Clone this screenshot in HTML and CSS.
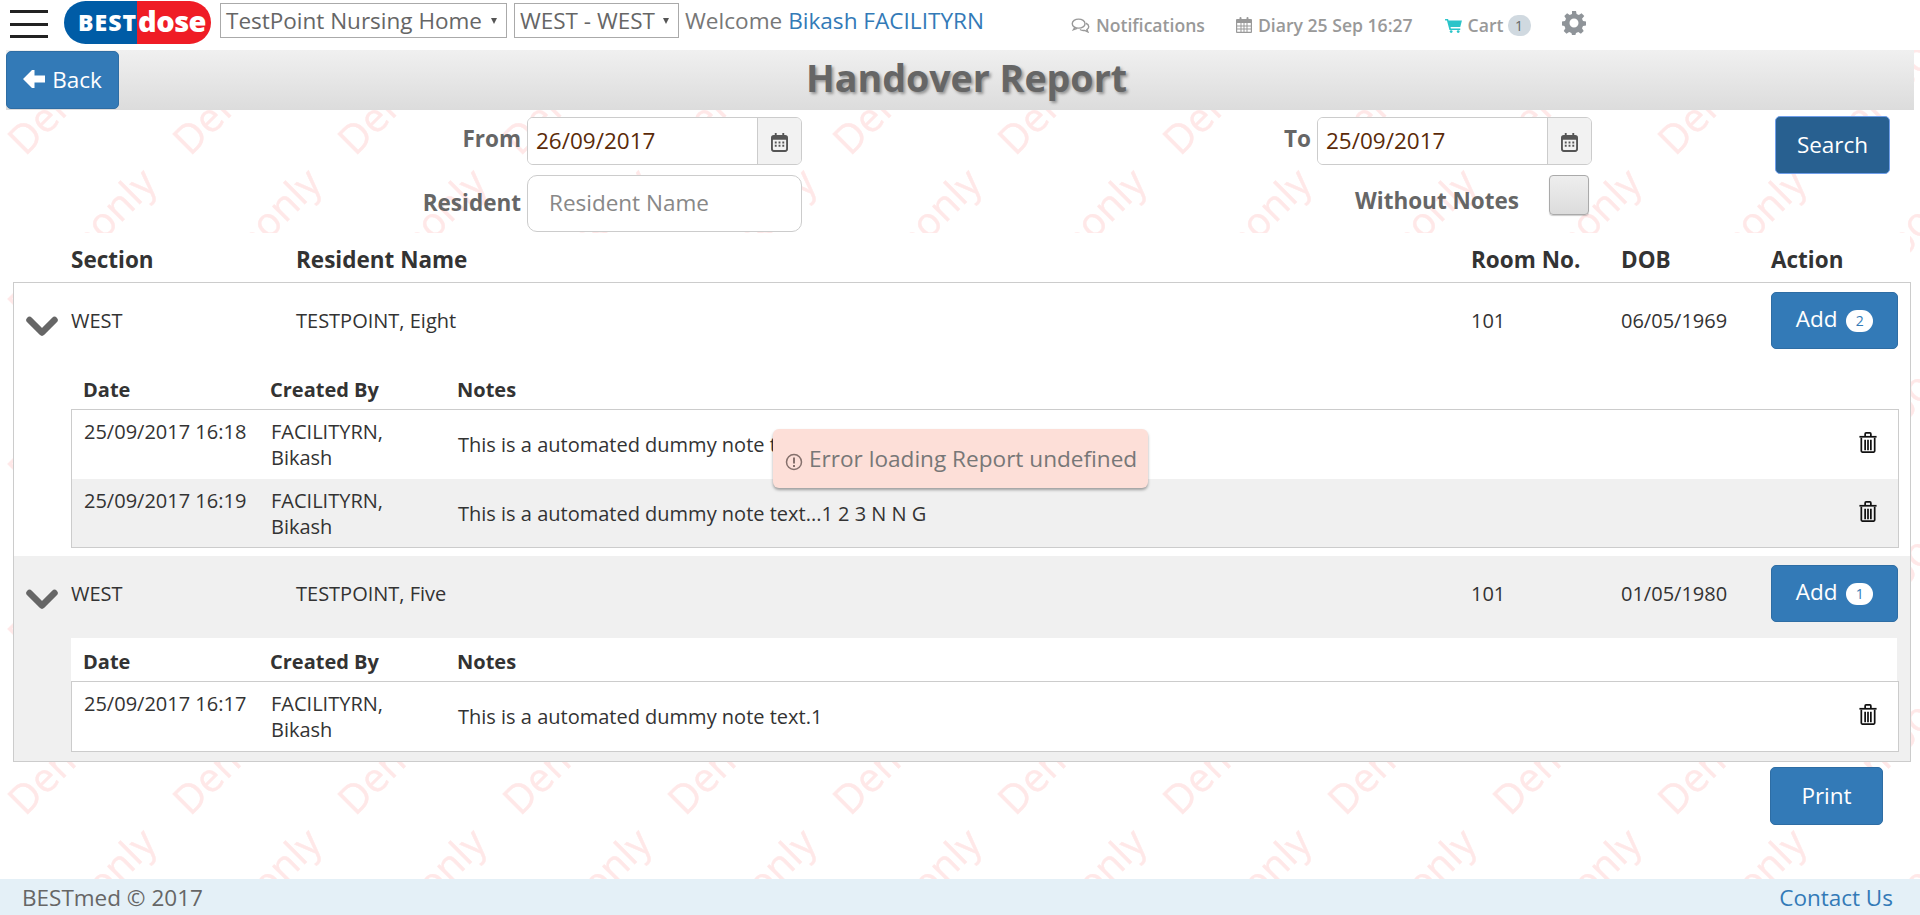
FILE: index.html
```html
<!DOCTYPE html>
<html lang="en">
<head>
<meta charset="utf-8">
<title>Handover Report</title>
<link rel="stylesheet" href="styles.css">
</head>
<body>
<svg class="watermark" aria-hidden="true">
  <defs>
    <pattern id="wm" width="165" height="165" patternUnits="userSpaceOnUse">
      <text class="wm-text" transform="translate(25 157) rotate(-45)">Demo</text>
      <text class="wm-text" transform="translate(103 76) rotate(-45)">only</text>
      <text class="wm-text" transform="translate(-62 76) rotate(-45)">only</text>
    </pattern>
  </defs>
  <rect width="100%" height="100%" fill="url(#wm)"/>
</svg>

<header class="topbar">
  <div class="burger"><span></span><span></span><span></span></div>
  <div class="logo"><span class="logo-best">BEST</span><span class="logo-dose">dose</span></div>
  <div class="select select-home"><span>TestPoint Nursing Home</span><i class="caret"></i></div>
  <div class="select select-west"><span>WEST - WEST</span><i class="caret"></i></div>
  <div class="welcome">Welcome <a class="link">Bikash FACILITYRN</a></div>
  <nav class="topnav">
    <span class="nav-item nav-notes">
      <svg class="ico" viewBox="0 0 20 16" width="19" height="15"><g fill="none" stroke="#999" stroke-width="1.5"><ellipse cx="8" cy="6" rx="6.8" ry="4.8"/><path d="M4 10l-1.5 2.5L6.5 11"/><path d="M15.8 5.6c2 1 3 2.4 3 3.8 0 1.2-.8 2.2-2 3l1 2.4-3.4-1.6c-1.8.3-3.6 0-5-.9"/></g></svg>
      Notifications</span>
    <span class="nav-item nav-diary">
      <svg class="ico" viewBox="0 0 16 18" width="16" height="18"><g fill="#999"><path d="M1 3h14a1 1 0 0 1 1 1v12a1 1 0 0 1-1 1H1a1 1 0 0 1-1-1V4a1 1 0 0 1 1-1zm.2 4v8.8h13.600V7z"/><rect x="3.500" y="1" width="2" height="4" rx="1"/><rect x="10.500" y="1" width="2" height="4" rx="1"/><path d="M4.500 7h1v9h-1zM7.500 7h1v9h-1zM10.500 7h1v9h-1zM1 9.500h14v1H1zM1 12.500h14v1H1z"/></g></svg>
      Diary 25 Sep 16:27</span>
    <span class="nav-item nav-cart">
      <svg class="ico" viewBox="0 0 18 16" width="17" height="15"><path fill="#2bc4c9" d="M0 1h3.200l.5 1.700H18l-1.800 7H5.800l.4 1.500h10v1.600H4.700L2 2.600H0z"/><circle cx="6.500" cy="14.500" r="1.500" fill="#2bc4c9"/><circle cx="14" cy="14.500" r="1.500" fill="#2bc4c9"/></svg>
      Cart <b class="nav-badge">1</b></span>
    <svg class="gear" viewBox="0 0 24 24" width="24" height="24"><path fill="#8f9499" fill-rule="evenodd" d="M10 1h4l.6 3 2.300 1 2.600-1.700 2.800 2.800L20 8.700l1 2.300 3 .6v3.800l-3 .6-1 2.300 1.700 2.600-2.800 2.800-2.600-1.700-2.300 1-.6 2H10l-.6-2-2.300-1-2.600 1.700-2.800-2.800L3.400 18.300l-1-2.300-2.400-.6v-3.800l3-.6 1-2.300-1.700-2.600 2.800-2.800 2.600 1.700 2.300-1zM12 8.500a4.500 4.500 0 1 0 0 9 4.500 4.500 0 0 0 0-9z" transform="translate(0 -1)"/></svg>
  </nav>
</header>

<section class="titlebar">
  <button class="btn btn-back">
    <svg viewBox="0 0 22 18" width="22" height="18"><path fill="#fff" d="M0 9l9-9h2.500v5.500H22v7H11.500V18H9z"/></svg>
    Back</button>
  <h1 class="title">Handover Report</h1>
</section>

<section class="filter">
  <label class="flabel">From</label>
  <div class="datebox"><input class="dateinput" value="26/09/2017"><span class="addon"><svg viewBox="0 0 18 20" width="17" height="19"><path fill="#555" fill-rule="evenodd" d="M3 2h1V0h2v2h6V0h2v2h1a3 3 0 0 1 3 3v12a3 3 0 0 1-3 3H3a3 3 0 0 1-3-3V5a3 3 0 0 1 3-3zm-1 5v10a1 1 0 0 0 1 1h12a1 1 0 0 0 1-1V7zm2 2h2v2H4zm4 0h2v2H8zm4 0h2v2h-2zM4 12.500h2v2H4zm4 0h2v2H8zm4 0h2v2h-2z"/></svg></span></div>
  <label class="flabel">To</label>
  <div class="datebox"><input class="dateinput" value="25/09/2017"><span class="addon"><svg viewBox="0 0 18 20" width="17" height="19"><path fill="#555" fill-rule="evenodd" d="M3 2h1V0h2v2h6V0h2v2h1a3 3 0 0 1 3 3v12a3 3 0 0 1-3 3H3a3 3 0 0 1-3-3V5a3 3 0 0 1 3-3zm-1 5v10a1 1 0 0 0 1 1h12a1 1 0 0 0 1-1V7zm2 2h2v2H4zm4 0h2v2H8zm4 0h2v2h-2zM4 12.500h2v2H4zm4 0h2v2H8zm4 0h2v2h-2z"/></svg></span></div>
  <span></span>
  <button class="btn btn-search">Search</button>
  <label class="flabel flabel-res">Resident</label>
  <input class="resinput" placeholder="Resident Name">
  <div class="notes-filter"><label class="flabel-notes">Without Notes</label><span class="check"></span></div>
</section>

<section class="list">
  <div class="cols head">
    <span></span><span>Section</span><span>Resident Name</span><span>Room No.</span><span>DOB</span><span>Action</span>
  </div>
  <div class="outer">
    <article class="resident">
      <div class="cols main">
        <svg class="chev" viewBox="0 0 32 21" width="32" height="21"><path fill="none" stroke="#666" stroke-width="6.500" stroke-linecap="round" stroke-linejoin="round" d="M3.500 4L16 16.500 28.500 4"/></svg>
        <span>WEST</span><span>TESTPOINT, Eight</span><span>101</span><span>06/05/1969</span>
        <button class="btn btn-add">Add <b class="badge">2</b></button>
      </div>
      <div class="subhead"><span>Date</span><span>Created By</span><span>Notes</span></div>
      <div class="subtable">
        <div class="subrow">
          <span class="cell-top">25/09/2017 16:18</span><span class="cell-top">FACILITYRN,<br>Bikash</span><span class="cell-note">This is a automated dummy note text.1</span>
          <svg class="trash" viewBox="0 0 18 22" width="18" height="21"><g fill="none" stroke="#111" stroke-width="1.800"><path d="M0 5h18"/><path d="M6 5V2a1 1 0 0 1 1-1h4a1 1 0 0 1 1 1v3"/><path d="M2 6v14a1 1 0 0 0 1 1h12a1 1 0 0 0 1-1V6"/><path d="M6 8v11M9 8v11M12 8v11"/></g></svg>
        </div>
        <div class="subrow alt">
          <span class="cell-top">25/09/2017 16:19</span><span class="cell-top">FACILITYRN,<br>Bikash</span><span class="cell-note">This is a automated dummy note text...1 2 3 N N G</span>
          <svg class="trash" viewBox="0 0 18 22" width="18" height="21"><g fill="none" stroke="#111" stroke-width="1.800"><path d="M0 5h18"/><path d="M6 5V2a1 1 0 0 1 1-1h4a1 1 0 0 1 1 1v3"/><path d="M2 6v14a1 1 0 0 0 1 1h12a1 1 0 0 0 1-1V6"/><path d="M6 8v11M9 8v11M12 8v11"/></g></svg>
        </div>
      </div>
    </article>
    <article class="resident alt">
      <div class="cols main">
        <svg class="chev" viewBox="0 0 32 21" width="32" height="21"><path fill="none" stroke="#666" stroke-width="6.500" stroke-linecap="round" stroke-linejoin="round" d="M3.500 4L16 16.500 28.500 4"/></svg>
        <span>WEST</span><span>TESTPOINT, Five</span><span>101</span><span>01/05/1980</span>
        <button class="btn btn-add">Add <b class="badge">1</b></button>
      </div>
      <div class="subhead"><span>Date</span><span>Created By</span><span>Notes</span></div>
      <div class="subtable">
        <div class="subrow">
          <span class="cell-top">25/09/2017 16:17</span><span class="cell-top">FACILITYRN,<br>Bikash</span><span class="cell-note">This is a automated dummy note text.1</span>
          <svg class="trash" viewBox="0 0 18 22" width="18" height="21"><g fill="none" stroke="#111" stroke-width="1.800"><path d="M0 5h18"/><path d="M6 5V2a1 1 0 0 1 1-1h4a1 1 0 0 1 1 1v3"/><path d="M2 6v14a1 1 0 0 0 1 1h12a1 1 0 0 0 1-1V6"/><path d="M6 8v11M9 8v11M12 8v11"/></g></svg>
        </div>
      </div>
    </article>
  </div>
  <div class="print-row"><button class="btn btn-print">Print</button></div>
</section>

<footer class="footer"><span>BESTmed © 2017</span><a class="link">Contact Us</a></footer>

<div class="toast">
  <svg viewBox="0 0 18 18" width="18" height="18"><circle cx="9" cy="9" r="7.500" fill="none" stroke="#85706c" stroke-width="1.500"/><path d="M9 4.500v6M9 12v2" stroke="#85706c" stroke-width="2"/></svg>
  <span>Error loading Report undefined</span>
</div>
</body>
</html>
```
FILE: styles.css
```css
* { box-sizing: border-box; }
html { background: #fff; }
body {
  margin: 0;
  height: 915px;
  overflow: hidden;
  position: relative;
  display: flex;
  flex-direction: column;
  font-family: "Open Sans", "Liberation Sans", sans-serif;
  font-size: 20px;
  color: #333;
}
.link { color: #337ab7; }
.watermark { position: absolute; top: 0; left: 0; width: 100%; height: 100%; z-index: -1; }
.wm-text { font-family: "Open Sans", sans-serif; font-size: 40px; fill: #ffe8e8; stroke: #ffe8e8; stroke-width: 0.4px; }

.topbar { height: 50px; display: flex; align-items: flex-start; background: #fff; position: relative; }
.burger { width: 38px; margin: 10px 0 0 10px; display: flex; flex-direction: column; gap: 9.500px; }
.burger span { height: 3px; background: #222; }
.logo { width: 147px; height: 43px; margin: 1px 0 0 16px; border-radius: 22px; overflow: hidden; display: flex; color: #fff; font-weight: 800; }
.logo-best { width: 73px; background: #005ca6; font-size: 23px; line-height: 43px; text-align: right; letter-spacing: 1px; }
.logo-dose { width: 74px; background: #ef1c25; font-size: 29px; line-height: 39px; padding-left: 1px; letter-spacing: -0.5px; }
.select { height: 35px; margin-top: 3px; border: 1px solid #aaa; background: #fff; display: flex; align-items: center; justify-content: space-between; padding: 0 9px 0 5px; font-size: 22.500px; color: #666; line-height: 33px; }
.select-home { width: 287px; margin-left: 9px; }
.select-west { width: 165px; margin-left: 7px; }
.caret { width: 0; height: 0; border: 3.500px solid transparent; border-top: 6px solid #555; border-bottom: 0; }
.welcome { margin: 3px 0 0 6px; font-size: 22.600px; line-height: 35px; color: #777; white-space: nowrap; }
.topnav { display: flex; align-items: flex-start; font-size: 17.600px; font-weight: 600; color: #999; white-space: nowrap; }
.nav-item { display: flex; align-items: center; height: 22px; margin-top: 14px; gap: 6px; }
.nav-notes { margin-left: 87px; }
.nav-diary { margin-left: 31px; }
.nav-cart { margin-left: 32px; }
.nav-badge { display: inline-block; width: 23px; height: 21px; border-radius: 10px; background: #d0d9e0; color: #666; font-size: 14px; font-weight: 400; line-height: 22px; text-align: center; margin-left: -2px; }
.gear { margin: 11px 0 0 31px; }

.titlebar { height: 60px; margin: 0 6px; display: flex; padding: 1px 0; background: linear-gradient(#f0f0f0, #dcdcdc); position: relative; }
.btn { font-family: inherit; font-size: 22.500px; color: #fff; background: #337ab7; border: 1px solid #2e6da4; border-radius: 5px; padding: 0 0 2px; }
.btn-back { width: 113px; height: 58px; display: flex; align-items: center; justify-content: center; gap: 7px; }
.title { flex: 1; margin: 0; padding-right: 100px; text-align: center; font-size: 37.600px; font-weight: 700; line-height: 54px; color: #666; text-shadow: 2px 2px 3px rgba(0,0,0,.35); }

.filter { height: 123px; display: grid; grid-template-columns: 527px 275px 515px 275px 183px 115px; grid-template-rows: 48px 57px; row-gap: 10px; padding-top: 7px; align-items: start; }
.flabel { font-size: 22.500px; font-weight: 700; color: #666; text-align: right; padding-right: 6px; line-height: 44px; }
.flabel-res { line-height: 56px; }
.datebox { height: 48px; display: flex; border: 1px solid #ccc; border-radius: 6px; background: #fff; overflow: hidden; }
.dateinput { flex: 1; min-width: 0; border: 0; outline: 0; background: #fff; font: 22.500px "Open Sans", sans-serif; color: #5a2a08; padding: 0 0 2px 8px; }
.addon { width: 44px; background: #f2f2f2; border-left: 1px solid #ccc; display: flex; align-items: center; justify-content: center; padding-top: 3px; }
.btn-search { grid-column: 6; grid-row: 1 / span 2; height: 58px; margin-top: -1px; background: #286090; border-color: #6f9eea; }
.resinput { height: 57px; width: 275px; border: 1px solid #ccc; border-radius: 10px; background: #fff; outline: 0; font: 22.500px "Open Sans", sans-serif; color: #555; padding: 0 0 2px 21px; }
.resinput::placeholder { color: #888; opacity: 1; }
.notes-filter { grid-column: 3 / span 2; display: flex; justify-content: flex-end; padding-right: 3px; }
.flabel-notes { font-size: 22.500px; font-weight: 700; color: #666; line-height: 52px; margin-right: 30px; }
.check { width: 40px; height: 40px; border: 1px solid #aaa; border-radius: 4px; background: linear-gradient(#eee, #dcdcdc); box-shadow: 0 1px 1px rgba(0,0,0,.2); }

.list { flex: 1; }
.cols { display: grid; grid-template-columns: 57px 225px 1175px 150px 150px 127px; }
.head { height: 49px; margin-left: 13px; width: 1897px; padding-left: 1px; background: #fff; font-size: 22.500px; font-weight: 700; line-height: 54px; color: #333; }
.outer { margin-left: 13px; width: 1898px; border: 1px solid #ccc; border-top-width: 1px; }
.resident { background: #fff; padding-bottom: 8px; }
.resident.alt { background: #f0f0f0; padding-bottom: 9px; }
.main { height: 82px; line-height: 76px; }
.chev { margin: 33px 0 0 12px; }
.btn-add { height: 57px; margin-top: 9px; line-height: 44px; padding-bottom: 4px; }
.badge { display: inline-block; min-width: 27px; height: 22px; vertical-align: 1px; border-radius: 11px; background: #fff; color: #337ab7; font-size: 14px; font-weight: 400; line-height: 22px; text-align: center; margin-left: 3px; }
.subhead { margin-left: 57px; width: 1826px; height: 44px; padding-left: 12px; background: #fff; display: grid; grid-template-columns: 187px 187px 1fr; font-weight: 700; line-height: 50px; color: #333; }
.alt .subhead { height: 43px; line-height: 48px; }
.subtable { margin-left: 57px; width: 1828px; border: 1px solid #ccc; background: #fff; }
.subrow { height: 68px; display: grid; grid-template-columns: 199px 187px 1fr 39px; background: #fff; }
.subrow:first-child { height: 69px; }
.subrow.alt { background: #f0f0f0; }
.cell-top { padding-top: 9px; line-height: 26px; }
.cell-top:first-child { padding-left: 12px; }
.cell-note { line-height: 70px; }
.trash { margin-top: 22px; }
.print-row { display: flex; justify-content: flex-end; padding: 5px 37px 0 0; }
.btn-print { width: 113px; height: 58px; }

.footer { height: 36px; display: flex; justify-content: space-between; align-items: center; padding: 0 27px 0 22px; background: #e4f0f7; font-size: 22.500px; color: #666; position: relative; }

.toast { position: absolute; left: 773px; top: 429px; width: 375px; height: 59px; display: flex; align-items: center; gap: 6px; padding: 0 0 1px 12px; background: #fddfd8; border-radius: 6px; box-shadow: 0 2px 3px rgba(0,0,0,.35); font-size: 22.600px; color: #777; white-space: nowrap; }
.toast svg { margin-top: 7px; }
```
